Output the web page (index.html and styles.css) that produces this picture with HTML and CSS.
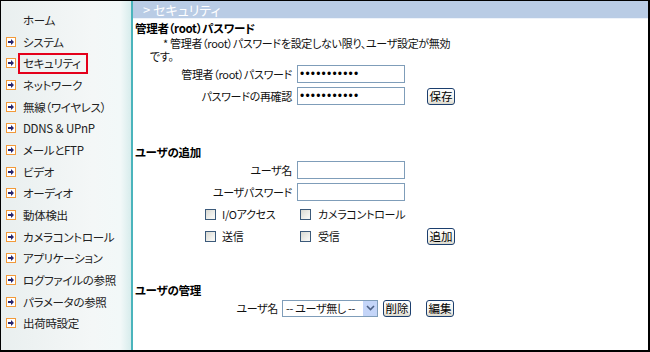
FILE: index.html
```html
<!DOCTYPE html>
<html>
<head>
  <title>セキュリティ</title>
  <link rel="stylesheet" href="styles.css">
</head>
<body>

<svg width="0" height="0" style="position:absolute">
  <symbol id="arw" viewBox="0 0 10 10">
    <rect x="0.5" y="0.5" width="9" height="9" fill="#fff" stroke="#f29a3a"/>
    <path d="M2 4h3V2l3 3-3 3V6H2z" fill="#26246e"/>
  </symbol>
</svg>

<div class="frame">

  <!-- Menu -->
  <nav class="side">
    <ul class="menu">
      <li class="plain">ホーム</li>
      <li><svg class="ico"><use href="#arw"/></svg>システム</li>
      <li><svg class="ico"><use href="#arw"/></svg><span class="cur">セキュリティ</span></li>
      <li><svg class="ico"><use href="#arw"/></svg>ネットワーク</li>
      <li><svg class="ico"><use href="#arw"/></svg>無線（ワイヤレス）</li>
      <li><svg class="ico"><use href="#arw"/></svg>DDNS<span class="amp">＆</span>UPnP</li>
      <li><svg class="ico"><use href="#arw"/></svg>メールとFTP</li>
      <li><svg class="ico"><use href="#arw"/></svg>ビデオ</li>
      <li><svg class="ico"><use href="#arw"/></svg>オーディオ</li>
      <li><svg class="ico"><use href="#arw"/></svg>動体検出</li>
      <li><svg class="ico"><use href="#arw"/></svg>カメラコントロール</li>
      <li><svg class="ico"><use href="#arw"/></svg>アプリケーション</li>
      <li><svg class="ico"><use href="#arw"/></svg>ログファイルの参照</li>
      <li><svg class="ico"><use href="#arw"/></svg>パラメータの参照</li>
      <li><svg class="ico"><use href="#arw"/></svg>出荷時設定</li>
    </ul>
  </nav>

  <main class="main">
    <div class="bar">&gt; セキュリティ</div>

    <!-- Admin password -->
    <h3 class="title first">管理者（root）パスワード</h3>
    <p class="note">* 管理者（root）パスワードを設定しない限り、ユーザ設定が無効<br>です。</p>
    <div class="row">
      <label>管理者（root）パスワード</label>
      <input type="password" value="xxxxxxxxxxx">
    </div>
    <div class="row">
      <label>パスワードの再確認</label>
      <input type="password" value="xxxxxxxxxxx">
      <button class="btn">保存</button>
    </div>

    <!-- Add user -->
    <h3 class="title add">ユーザの追加</h3>
    <div class="row">
      <label>ユーザ名</label>
      <input type="text">
    </div>
    <div class="row">
      <label>ユーザパスワード</label>
      <input type="text">
    </div>
    <div class="checks">
      <span class="chk"><i class="cb"></i>I/Oアクセス</span>
      <span class="chk"><i class="cb"></i>カメラコントロール</span>
    </div>
    <div class="checks">
      <span class="chk"><i class="cb"></i>送信</span>
      <span class="chk"><i class="cb"></i>受信</span>
      <button class="btn">追加</button>
    </div>

    <!-- Manage users -->
    <h3 class="title manage">ユーザの管理</h3>
    <div class="pick">
      <label>ユーザ名</label>
      <div class="sel">
        <span class="opt">-- ユーザ無し --</span>
        <span class="drop">
          <svg width="9" height="6" viewBox="0 0 9 6"><path d="M1 1l3.5 3.5L8 1" fill="none" stroke="#4d6185" stroke-width="1.6"/></svg>
        </span>
      </div>
      <button class="btn">削除</button>
      <button class="btn edit">編集</button>
    </div>
  </main>

</div>

</body>
</html>
```

FILE: styles.css
```css
body {
  margin: 0;
  background: #fff;
  font-family: "Noto Sans CJK JP", "Liberation Sans", sans-serif;
  font-feature-settings: "palt" 1;
  font-size: 11px;
  letter-spacing: -0.3px;
  color: #111;
}

.frame {
  width: 650px;
  height: 352px;
  box-sizing: border-box;
  border: solid #000;
  border-width: 1px 2px 2px 1px;
  display: flex;
}

/* Menu */
.side {
  width: 130px;
  flex: none;
  border-right: 2px solid #4ab4bc;
  background: linear-gradient(to right, #e9efef 0%, #f4f7f7 70%, #f2f8f8 92%, #d7ecec 100%);
}

.menu {
  list-style: none;
  margin: 0;
  padding: 8px 0 0 0;
}

.menu li {
  height: 21.7px;
  display: flex;
  align-items: center;
  padding-left: 5px;
  color: #222;
  font-size: 11.5px;
  white-space: nowrap;
}

.menu li.plain {
  padding-left: 22px;
}

.amp {
  font-feature-settings: normal;
  margin: 0 1px;
}

.ico {
  width: 10px;
  height: 10px;
  margin-right: 7px;
  flex: none;
}

.cur {
  margin-left: -5px;
  padding: 0 0 0 3px;
  width: 63px;
  height: 17px;
  line-height: 17px;
  border: 2px solid #e4001b;
}

/* Content */
.main {
  flex: 1;
  display: flex;
  flex-direction: column;
}

.bar {
  height: 17px;
  line-height: 17px;
  background: #b9cce5;
  border-bottom: 1px solid #eef3fa;
  color: #fff;
  font-size: 13px;
  letter-spacing: 0;
  padding-left: 10px;
}

.title {
  margin: 0;
  padding-left: 2px;
  font-size: 11.5px;
  font-weight: bold;
  line-height: 14px;
  color: #000;
}

.title.first { margin-top: 2px; }
.title.add { margin-top: 38px; }
.title.manage { margin-top: 36px; }

.note {
  margin: 2px 0 0 0;
  padding-left: 17px;
  text-indent: 13px;
  line-height: 13px;
  color: #111;
}

.row {
  height: 22px;
  display: flex;
  align-items: center;
}

.row label {
  width: 159px;
  text-align: right;
  margin-right: 5px;
  flex: none;
}

input {
  width: 108px;
  height: 18px;
  box-sizing: border-box;
  border: 1px solid #7f9db9;
  padding: 0 2px;
  margin: 0;
  font-family: "Liberation Sans", sans-serif;
  font-size: 12px;
  letter-spacing: 1.2px;
  outline: none;
}

.btn {
  height: 17px;
  width: 28px;
  padding: 0;
  margin-left: 22px;
  border: 1px solid #1c3f6e;
  border-radius: 3px;
  background: linear-gradient(#ffffff, #f1f0ea 70%, #dcd9cc);
  font-family: "Noto Sans CJK JP", sans-serif;
  font-feature-settings: "palt" 1;
  font-size: 11.5px;
  line-height: 14px;
  color: #000;
}

.checks {
  height: 22px;
  display: flex;
  align-items: center;
  padding-left: 72px;
}

.chk {
  display: flex;
  align-items: center;
  width: 95px;
  flex: none;
  white-space: nowrap;
}

.cb {
  width: 11px;
  height: 11px;
  box-sizing: border-box;
  border: 1px solid #3c5a7a;
  background: linear-gradient(135deg, #d9d9d2, #f6f6f3 80%);
  margin-right: 6px;
  flex: none;
}

.chk + .chk .cb {
  margin-right: 7px;
}

.checks .btn {
  margin-left: 32px;
}

.pick {
  height: 22px;
  display: flex;
  align-items: center;
}

.pick label {
  width: 145px;
  text-align: right;
  margin-right: 4px;
  flex: none;
}

.sel {
  width: 96px;
  height: 17px;
  box-sizing: border-box;
  border: 1px solid #7f9db9;
  display: flex;
  align-items: center;
  justify-content: space-between;
  padding-left: 3px;
  flex: none;
}

.opt {
  white-space: nowrap;
  line-height: 15px;
  font-size: 11px;
}

.drop {
  width: 14px;
  height: 15px;
  background: #c4d5f8;
  display: flex;
  align-items: center;
  justify-content: center;
}

.pick .btn {
  margin-left: 5px;
}

.pick .btn.edit {
  margin-left: 15px;
}
```
